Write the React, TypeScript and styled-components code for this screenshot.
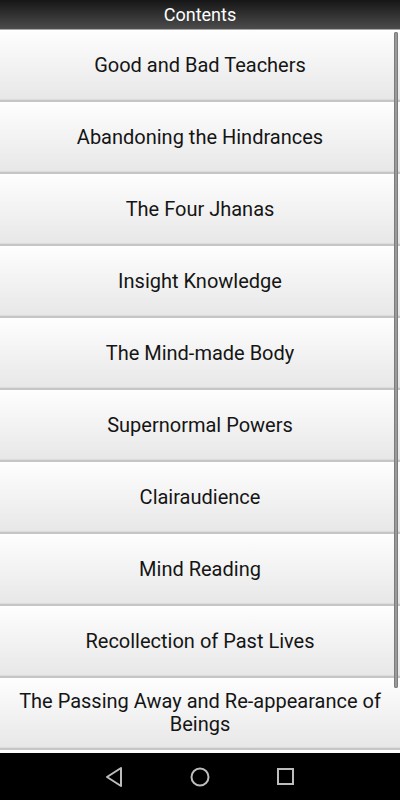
import styled, { createGlobalStyle } from 'styled-components';

const chapters = [
  'Good and Bad Teachers',
  'Abandoning the Hindrances',
  'The Four Jhanas',
  'Insight Knowledge',
  'The Mind-made Body',
  'Supernormal Powers',
  'Clairaudience',
  'Mind Reading',
  'Recollection of Past Lives',
  'The Passing Away and Re-appearance of Beings',
];

const GlobalStyle = createGlobalStyle`
  html, body {
    margin: 0;
    padding: 0;
    background: #000;
  }
  body {
    font-family: Roboto, "Liberation Sans", sans-serif;
  }
`;

export default function App() {
  return (
    <Screen>
      <GlobalStyle />
      <Header>Contents</Header>
      <List>
        {chapters.map((title) => (
          <Item key={title}>{title}</Item>
        ))}
        <ScrollThumb />
      </List>
      <NavBar>
        <NavButton aria-label="back">
          <svg width="20" height="22" viewBox="0 0 20 22">
            <path d="M17 2 L3 11 L17 20 Z" fill="none" stroke="#bdbdbd" strokeWidth="2" strokeLinejoin="round" />
          </svg>
        </NavButton>
        <NavButton aria-label="home">
          <svg width="22" height="22" viewBox="0 0 22 22">
            <circle cx="11" cy="11" r="8.5" fill="none" stroke="#bdbdbd" strokeWidth="2" />
          </svg>
        </NavButton>
        <NavButton aria-label="recents">
          <svg width="20" height="20" viewBox="0 0 20 20">
            <rect x="2" y="2" width="15" height="15" fill="none" stroke="#bdbdbd" strokeWidth="2" />
          </svg>
        </NavButton>
      </NavBar>
    </Screen>
  );
}

const Screen = styled.div`
  width: 400px;
  height: 800px;
  display: flex;
  flex-direction: column;
  overflow: hidden;
  background: #fff;
`;

const Header = styled.div`
  height: 29px;
  flex: 0 0 29px;
  border-bottom: 1px solid #a8a8a8;
  background: linear-gradient(#161616, #4c4c4c);
  color: #fff;
  font-size: 18px;
  display: flex;
  align-items: center;
  justify-content: center;
`;

const List = styled.div`
  position: relative;
  flex: 1;
  overflow: hidden;
  background: #fdfdfd;
`;

const Item = styled.div`
  height: 72px;
  box-sizing: border-box;
  border-bottom: 2px solid #c6c6c6;
  box-shadow: inset 0 -1px 0 #dcdcdc;
  background: linear-gradient(#fefefe, #e7e7e7);
  color: #151515;
  font-size: 20px;
  line-height: 23px;
  padding: 0 16px;
  display: flex;
  align-items: center;
  justify-content: center;
  text-align: center;
`;

const ScrollThumb = styled.div`
  position: absolute;
  top: 2px;
  right: 2px;
  width: 4px;
  height: 656px;
  border-radius: 2px;
  background: #9a9a9a;
  box-shadow: inset 0 0 0 1px #7c7c7c;
`;

const NavBar = styled.div`
  flex: 0 0 47px;
  background: #000;
  display: flex;
  align-items: center;
  justify-content: center;
  gap: 64px;
`;

const NavButton = styled.div`
  width: 22px;
  height: 22px;
  display: flex;
  align-items: center;
  justify-content: center;
`;
